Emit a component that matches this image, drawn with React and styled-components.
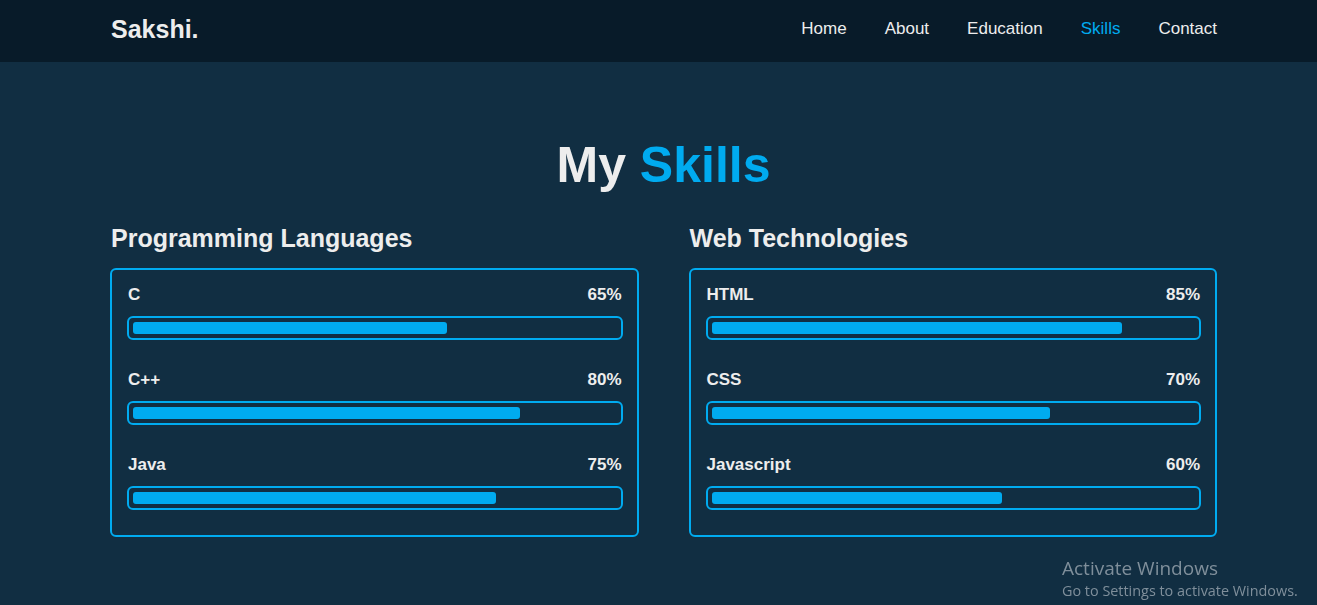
import React from "react";
import styled, { createGlobalStyle } from "styled-components";

const colors = {
  bg: "#081b29",
  second: "#112e42",
  main: "#00abf0",
  text: "#ededed",
};

const GlobalStyle = createGlobalStyle`
  * {
    box-sizing: border-box;
    margin: 0;
    padding: 0;
  }
  body {
    background: ${colors.second};
    color: ${colors.text};
    font-family: "Liberation Sans", Arial, sans-serif;
    overflow: hidden;
  }
`;

const skillGroups = [
  {
    title: "Programming Languages",
    skills: [
      { name: "C", level: 65 },
      { name: "C++", level: 80 },
      { name: "Java", level: 75 },
    ],
  },
  {
    title: "Web Technologies",
    skills: [
      { name: "HTML", level: 85 },
      { name: "CSS", level: 70 },
      { name: "Javascript", level: 60 },
    ],
  },
];

const navLinks = ["Home", "About", "Education", "Skills", "Contact"];

const App = () => {
  return (
    <>
      <GlobalStyle />
      <Header>
        <Logo href="#">Sakshi.</Logo>
        <Nav>
          {navLinks.map((link) => (
            <NavLink key={link} href="#" $active={link === "Skills"}>
              {link}
            </NavLink>
          ))}
        </Nav>
      </Header>
      <Section>
        <Heading>
          My <span>Skills</span>
        </Heading>
        <Columns>
          {skillGroups.map((group) => (
            <Column key={group.title}>
              <ColumnTitle>{group.title}</ColumnTitle>
              <Card>
                {group.skills.map((skill) => (
                  <Skill key={skill.name}>
                    <SkillRow>
                      <span>{skill.name}</span>
                      <span>{skill.level}%</span>
                    </SkillRow>
                    <Track>
                      <Fill style={{ width: `${skill.level}%` }} />
                    </Track>
                  </Skill>
                ))}
              </Card>
            </Column>
          ))}
        </Columns>
      </Section>
      <Watermark>
        <WatermarkTitle>Activate Windows</WatermarkTitle>
        <WatermarkText>Go to Settings to activate Windows.</WatermarkText>
      </Watermark>
    </>
  );
};

const Header = styled.header`
  height: 62px;
  background: ${colors.bg};
  display: flex;
  align-items: center;
  justify-content: space-between;
  padding: 0 100px 0 110px;
`;

const Logo = styled.a`
  font-size: 25px;
  font-weight: 700;
  color: ${colors.text};
  text-decoration: none;
  margin-top: -3px;
  padding-left: 1px;
`;

const Nav = styled.nav`
  display: flex;
  gap: 38px;
`;

const NavLink = styled.a`
  font-size: 17px;
  color: ${(p) => (p.$active ? colors.main : colors.text)};
  text-decoration: none;
  margin-top: -4px;
`;

const Section = styled.section`
  padding: 73px 100px 0 110px;
  min-height: 543px;
`;

const Heading = styled.h2`
  text-align: center;
  font-size: 50px;
  line-height: 60px;
  font-weight: 700;
  margin-bottom: 28px;

  span {
    color: ${colors.main};
  }
`;

const Columns = styled.div`
  display: grid;
  grid-template-columns: 1fr 1fr;
  gap: 50px;
`;

const Column = styled.div`
  display: flex;
  flex-direction: column;
`;

const ColumnTitle = styled.h3`
  font-size: 25px;
  line-height: 30px;
  font-weight: 700;
  margin-bottom: 15px;
  padding-left: 1px;
`;

const Card = styled.div`
  border: 2px solid ${colors.main};
  border-radius: 6px;
  padding: 14px 14px 25px 15px;
  display: flex;
  flex-direction: column;
  gap: 29px;
`;

const Skill = styled.div`
  display: flex;
  flex-direction: column;
  gap: 10px;
`;

const SkillRow = styled.div`
  display: flex;
  justify-content: space-between;
  font-size: 17px;
  line-height: 22px;
  font-weight: 700;
  padding: 0 1px;
`;

const Track = styled.div`
  height: 24px;
  border: 2px solid ${colors.main};
  border-radius: 6px;
  padding: 4px;
`;

const Fill = styled.div`
  height: 100%;
  background: ${colors.main};
  border-radius: 3px;
`;

const Watermark = styled.div`
  position: fixed;
  left: 1062px;
  top: 556px;
  font-family: "Open Sans", "Noto Sans", sans-serif;
  color: #8c9aa5;
  opacity: 0.9;
  pointer-events: none;
`;

const WatermarkTitle = styled.div`
  font-size: 19px;
  line-height: 25px;
`;

const WatermarkText = styled.div`
  font-size: 14.4px;
  line-height: 20px;
`;

export default App;
